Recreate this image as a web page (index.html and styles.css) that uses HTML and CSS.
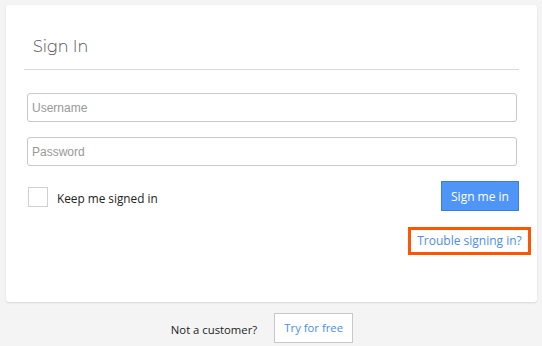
FILE: index.html
```html
<!DOCTYPE html>
<html>
<head>
<meta charset="utf-8">
<link rel="stylesheet" href="styles.css">
</head>
<body>
<div class="card">
  <div class="title-bar">
    <h1 class="title">Sign In</h1>
  </div>
  <form class="form">
    <input class="field" type="text" placeholder="Username">
    <input class="field" type="password" placeholder="Password">
    <div class="row">
      <label class="keep"><span class="box"></span>Keep me signed in</label>
      <button class="btn-primary" type="button">Sign me in</button>
    </div>
    <div class="trouble-row">
      <a class="trouble" href="#">Trouble signing in?</a>
    </div>
  </form>
</div>
<div class="footer">
  <span class="not">Not a customer?</span>
  <a class="try" href="#">Try for free</a>
</div>
</body>
</html>
```
FILE: styles.css
```css
* { box-sizing: border-box; }
html, body { margin: 0; padding: 0; }
body {
  background: #f4f4f4;
  font-family: "Open Sans", "Liberation Sans", sans-serif;
  width: 542px;
  height: 346px;
  overflow: hidden;
}
.card {
  margin: 5px 5px 0 6px;
  height: 297px;
  background: #fff;
  border-radius: 3px;
  box-shadow: 0 1px 2px rgba(0,0,0,0.12);
  padding: 0 18px;
}
.title-bar {
  height: 65px;
  border-bottom: 1px solid #d9d9d9;
  display: flex;
  align-items: flex-end;
  padding: 0 0 12px 9px;
}
.title {
  margin: 0;
  font-family: "Montserrat", "Lato", "Open Sans", sans-serif;
  font-weight: 300;
  font-size: 16px;
  color: #555;
  line-height: 20px;
}
.form {
  display: flex;
  flex-direction: column;
  padding: 23px 2px 0 3px;
}
.field {
  height: 29px;
  border: 1px solid #c8c8c8;
  border-radius: 3px;
  padding: 0 4px;
  font-family: "Liberation Sans", Arial, sans-serif;
  font-size: 12px;
  color: #333;
  margin: 0 0 15px 0;
  outline: none;
}
.field::placeholder { color: #999; }
.row {
  display: flex;
  justify-content: space-between;
  align-items: center;
  margin-top: 0;
  margin-right: -2px;
}
.keep {
  display: flex;
  align-items: center;
  font-size: 11.8px;
  color: #222;
  padding-top: 3px;
}
.box {
  width: 20px;
  height: 20px;
  border: 1px solid #d0d0d0;
  margin: -2px 9px 0 1px;
  background: #fff;
}
.btn-primary {
  width: 78px;
  height: 30px;
  background: #4f95f7;
  border: 1px solid #3b7ed6;
  color: #fff;
  font-family: "Open Sans", sans-serif;
  font-size: 12px;
  padding: 0;
}
.trouble-row {
  display: flex;
  justify-content: flex-end;
  margin: 16px -14px 0 0;
}
.trouble {
  display: block;
  border: 3px solid #ff5400;
  height: 28px;
  width: 123px;
  line-height: 22px;
  text-align: center;
  color: #4a8ee6;
  font-size: 12px;
  text-decoration: none;
}
.footer {
  display: flex;
  align-items: center;
  justify-content: center;
  margin-top: 11px;
  padding-right: 18px;
  gap: 17px;
}
.not {
  font-size: 11.3px;
  color: #222;
  padding-top: 2px;
}
.try {
  display: block;
  width: 79px;
  height: 30px;
  border: 1px solid #c8c8c8;
  background: #fff;
  line-height: 28px;
  text-align: center;
  color: #4a8ee6;
  font-size: 11.3px;
  text-decoration: none;
}
```
